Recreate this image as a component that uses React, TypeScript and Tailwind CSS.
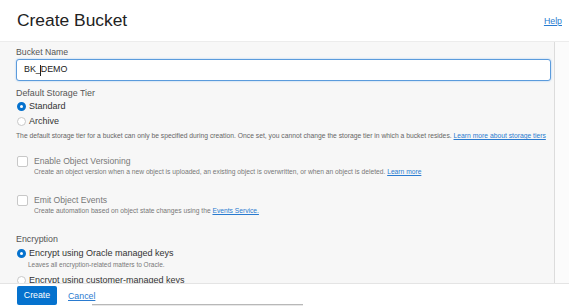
import { FC, ReactNode } from "react";

const font = { fontFamily: '"Liberation Sans", Arial, sans-serif' };

const Radio: FC<{ checked?: boolean }> = ({ checked }) =>
  checked ? (
    <span className="w-[9px] h-[9px] rounded-full border-[3px] border-[#0572ce] bg-white shrink-0" />
  ) : (
    <span className="w-[9px] h-[9px] rounded-full border border-[#c8c8c8] bg-white shrink-0" />
  );

const RadioRow: FC<{ checked?: boolean; children: ReactNode; className?: string }> = ({
  checked,
  children,
  className = "",
}) => (
  <div className={`flex items-center gap-[3px] h-[15px] pl-[1px] ${className}`}>
    <Radio checked={checked} />
    <span className="text-[9px] leading-[11px] text-[#333]">{children}</span>
  </div>
);

const CheckRow: FC<{ label: string; className?: string }> = ({ label, className = "" }) => (
  <div className={`flex items-center gap-[6px] h-[14px] pl-[1px] ${className}`}>
    <span className="w-[11px] h-[11px] rounded-[2px] border border-[#c8c8c8] bg-white shrink-0" />
    <span className="text-[8.6px] leading-[11px] text-[#777]">{label}</span>
  </div>
);

const Link: FC<{ children: ReactNode }> = ({ children }) => (
  <a href="#" className="text-[#2a7bd0] underline">
    {children}
  </a>
);

export default function App() {
  return (
    <div className="relative w-[569px] h-[306px] overflow-hidden bg-white" style={font}>
      {/* header */}
      <div className="flex items-center justify-between h-[42px] pl-[17px] pr-[7px] bg-white border-b border-[#ececec]">
        <h1 className="text-[17.4px] leading-none text-[#222]">Create Bucket</h1>
        <a href="#" className="text-[8.8px] text-[#2a7bd0] underline mt-[2px]">
          Help
        </a>
      </div>

      {/* body */}
      <div className="flex h-[241px]">
        <div className="flex-1 bg-[#f7f7f7] pl-[16px] pr-[3px] pt-[5px] overflow-hidden">
          <div className="h-[11px] text-[8.7px] leading-[11px] text-[#555]">Bucket Name</div>
          <div className="mt-[1px] h-[22px] flex items-center pl-[7px] bg-white border-[1.5px] border-[#5b9bdc] rounded-[3px] shadow-[0_0_2px_#9cc4ee] text-[8.9px] text-[#222]">
            BK_
            <span className="inline-block w-[1px] h-[11px] bg-[#222] -ml-[1px]" />
            DEMO
          </div>

          <div className="mt-[7px] h-[11px] text-[8.9px] leading-[11px] text-[#555]">
            Default Storage Tier
          </div>
          <RadioRow checked>Standard</RadioRow>
          <RadioRow>Archive</RadioRow>
          <div className="h-[15px] flex items-center text-[6.75px] text-[#666] whitespace-nowrap">
            The default storage tier for a bucket can only be specified during creation. Once set, you
            cannot change the storage tier in which a bucket resides.&nbsp;
            <Link>Learn more about storage tiers</Link>
          </div>

          <CheckRow label="Enable Object Versioning" className="mt-[10px]" />
          <div className="h-[9px] pl-[18px] flex items-center text-[6.7px] text-[#777] whitespace-nowrap">
            Create an object version when a new object is uploaded, an existing object is overwritten,
            or when an object is deleted.&nbsp;<Link>Learn more</Link>
          </div>

          <CheckRow label="Emit Object Events" className="mt-[16px]" />
          <div className="h-[9px] pl-[18px] flex items-center text-[6.7px] text-[#777] whitespace-nowrap">
            Create automation based on object state changes using the&nbsp;
            <Link>Events Service.</Link>
          </div>

          <div className="mt-[18px] h-[11px] text-[8.9px] leading-[11px] text-[#555]">Encryption</div>
          <RadioRow checked className="mt-[1px] !h-[14px]">
            Encrypt using Oracle managed keys
          </RadioRow>
          <div className="h-[9px] pl-[12px] flex items-center text-[6.5px] text-[#777]">
            Leaves all encryption-related matters to Oracle.
          </div>
          <RadioRow className="mt-[4px] !h-[14px]">Encrypt using customer-managed keys</RadioRow>
        </div>
        <div className="w-[15px] bg-[#fbfbfb] border-l border-[#dcdcdc]" />
      </div>

      {/* footer */}
      <div className="h-[23px] bg-white border-t border-[#e4e4e4] flex items-start pl-[17px] pt-[2px] gap-[11px]">
        <button className="w-[40px] h-[19px] rounded-[2px] bg-[#0572ce] text-white text-[8.8px]">
          Create
        </button>
        <a href="#" className="mt-[4px] text-[8.8px] text-[#2a7bd0] underline">
          Cancel
        </a>
      </div>

      <div className="absolute bottom-0 left-[92px] w-[211px] h-[2px] border-t border-[#b8b8b8] bg-[#e8e8e8]" />
    </div>
  );
}
